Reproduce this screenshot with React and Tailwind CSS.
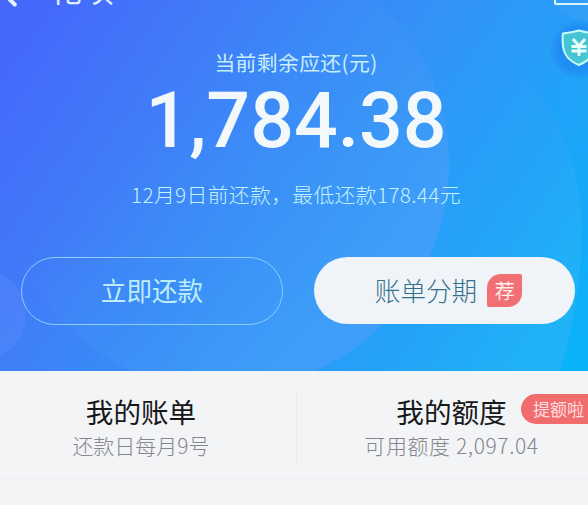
import React from 'react';
import { ChevronLeft } from 'lucide-react';

const HeroBackdrop = () => (
  <svg className="absolute inset-0 w-full h-full pointer-events-none" viewBox="0 0 588 371" preserveAspectRatio="none">
    <defs>
      <linearGradient id="base" gradientUnits="userSpaceOnUse" x1="0" y1="60" x2="500" y2="400">
        <stop offset="0" stopColor="#4568fb" />
        <stop offset="0.3" stopColor="#3f80f8" />
        <stop offset="0.55" stopColor="#3392f7" />
        <stop offset="0.8" stopColor="#24a2f8" />
        <stop offset="1" stopColor="#20b2f7" />
      </linearGradient>
      <linearGradient id="disc" gradientUnits="userSpaceOnUse" x1="190" y1="100" x2="370" y2="270">
        <stop offset="0" stopColor="#4a94f8" stopOpacity="0" />
        <stop offset="0.5" stopColor="#4496f6" stopOpacity="0.35" />
        <stop offset="1" stopColor="#429ef9" stopOpacity="0.85" />
      </linearGradient>
      <linearGradient id="edge" gradientUnits="userSpaceOnUse" x1="0" y1="50" x2="0" y2="371">
        <stop offset="0" stopColor="#08a0fa" stopOpacity="0" />
        <stop offset="0.5" stopColor="#08a6fa" stopOpacity="0.5" />
        <stop offset="1" stopColor="#08b4fa" stopOpacity="0.95" />
      </linearGradient>
      <radialGradient id="halo">
        <stop offset="0" stopColor="#1c7df0" stopOpacity="0.7" />
        <stop offset="0.75" stopColor="#1c7df0" stopOpacity="0.5" />
        <stop offset="1" stopColor="#1c7df0" stopOpacity="0" />
      </radialGradient>
    </defs>
    <rect width="588" height="371" fill="url(#base)" />
    <path d="M588 50H505Q582 130 582 230Q580 310 560 371H588Z" fill="url(#edge)" />
    <circle cx="224" cy="165" r="225" fill="url(#disc)" />
    <circle cx="-20" cy="315" r="46" fill="#6d94ff" fillOpacity="0.22" />
    <circle cx="590" cy="-27" r="48" fill="#4ba0f5" fillOpacity="0.3" />
    <circle cx="579" cy="49" r="30" fill="url(#halo)" />
  </svg>
);

const ShieldYuan = () => (
  <svg width="36" height="38" viewBox="0 0 36 38" fill="none">
    <path
      d="M18 1.5C13 3 7 4 2 4.500C1.500 6 1.500 11 2 17C3 26 9 32.500 18 36C27 32.500 33 26 34 17C34.500 11 34.500 6 34 4.500C29 4 23 3 18 1.500Z"
      fill="#43c5d3"
      stroke="#c9fbf5"
      strokeWidth="2"
    />
    <path d="M12 10L18 17L24 10M10.500 17.500H25.500M10.500 22H25.500M18 17V27" stroke="#e8fff9" strokeWidth="3" />
  </svg>
);

const App = () => {
  return (
    <div className="w-[588px] h-[505px] overflow-hidden bg-[#f2f4f6] font-['Noto_Sans_CJK_SC',sans-serif]">
      <header className="relative h-[371px] overflow-hidden">
        <HeroBackdrop />

        <div className="relative h-full flex flex-col items-center">
          <nav className="w-full h-[49px] shrink-0 relative">
            <ChevronLeft size={38} strokeWidth={2.5} className="absolute left-[-9px] top-[-24px] text-[#e4f2ff]" />
            <span className="absolute left-[50px] top-[-30px] text-[32px] leading-9 text-[#dceeff] whitespace-nowrap">花呗</span>
            <div className="absolute left-[554px] top-[-20px] w-12 h-[25px] border-2 border-[#d9f3fb] rounded-[2px]" />
            <div className="absolute left-[561px] top-[29px]">
              <ShieldYuan />
            </div>
          </nav>

          <p className="pl-1 text-[20.8px] leading-[26px] tracking-[0.4px] text-[#c8eefa] whitespace-nowrap">当前剩余应还(元)</p>
          <h1 className="pt-px pl-1 font-['Roboto',sans-serif] font-medium text-[77px] leading-[90px] text-[#f3f8fb] whitespace-nowrap">1,784.38</h1>
          <p className="mt-[14px] pl-1 text-[20.8px] leading-[28px] tracking-[0.35px] font-light text-[#c4f1fb] whitespace-nowrap">12月9日前还款，最低还款178.44元</p>

          <div className="mt-auto mb-[46px] w-full pl-[21px] pr-[13px] flex justify-between">
            <button className="w-[262px] h-[68px] rounded-full border border-[#8ccdfa] text-[#bdedf8] text-[25.6px] pb-[2px] flex items-center justify-center">
              立即还款
            </button>
            <button className="w-[261px] h-[67px] rounded-full bg-[#f0f4f8] text-[#35718f] text-[25.6px] font-light flex items-center justify-center gap-[10px] pl-2">
              账单分期
              <span className="w-[35px] h-[33px] rounded-tl-[14px] rounded-br-[14px] rounded-tr-[2px] rounded-bl-[2px] bg-[#f27074] text-[#ffecec] text-[20px] font-normal flex items-center justify-center">
                荐
              </span>
            </button>
          </div>
        </div>
      </header>

      <section className="h-[109px] pt-[23px] flex border-b border-[#eeeff2]">
        <div className="w-[297px] h-[70px] pr-[14px] flex flex-col items-center border-r border-[#e7e9ed]">
          <h2 className="text-[27.6px] leading-[34px] text-[#17181a]">我的账单</h2>
          <p className="text-[21px] leading-[34px] font-light text-[#85868e]">还款日每月9号</p>
        </div>
        <div className="relative w-[291px] flex flex-col items-center pl-[18px]">
          <h2 className="text-[27.6px] leading-[34px] text-[#17181a]">我的额度</h2>
          <p className="text-[21px] leading-[34px] tracking-[0.6px] font-light text-[#85868e]">可用额度 2,097.04</p>
          <span className="absolute left-[224px] top-0 w-[90px] h-[30px] pl-3 rounded-full bg-[#f16d6d] text-[#ffdcdf] text-[17px] leading-[29px] whitespace-nowrap">
            提额啦
          </span>
        </div>
      </section>
    </div>
  );
};

export default App;
